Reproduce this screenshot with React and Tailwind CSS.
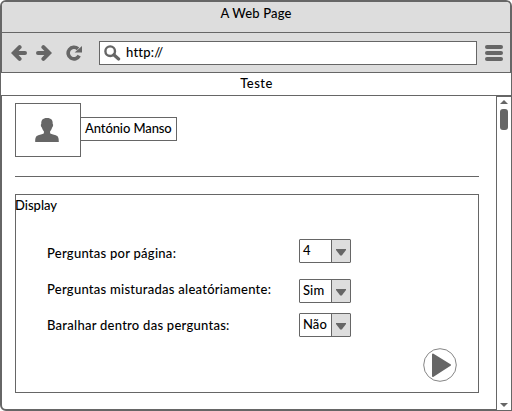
import React from 'react';

function Arrow({ className = '' }) {
  return (
    <svg width="16" height="16" viewBox="0 0 16 16" fill="none" stroke="#666" strokeWidth="4" className={className}>
      <path d="M8.6 2.2 2.8 8l5.8 5.8M3.5 8h10.5" strokeLinecap="round" />
    </svg>
  );
}

function Dropdown({ value, className = '' }) {
  return (
    <div className={`flex h-6 w-[52px] shrink-0 rounded-[1px] border border-[#666] bg-white ${className}`}>
      <div className="h-full w-[31px] pl-[3px] leading-[21px] tracking-[0.1px]">{value}</div>
      <div className="flex flex-1 items-center justify-center border-l border-[#666] bg-[#ddd] pt-[2px]">
        <svg width="10" height="7" viewBox="0 0 10 7" fill="#666"><path d="M0 0h10v1L5.8 6.5H4.2L0 1z" /></svg>
      </div>
    </div>
  );
}

function Setting({ label, value, className = '', labelClass }) {
  return (
    <div className={`flex h-6 ${className}`}>
      <div className={`w-[252px] whitespace-nowrap tracking-[0.26px] ${labelClass}`}>{label}</div>
      <Dropdown value={value} />
    </div>
  );
}

export default function App() {
  return (
    <div className="flex h-[411px] w-[512px] flex-col rounded-[6px] border-2 border-[#666] bg-white font-['Lato',sans-serif] text-[13px] font-medium text-black">
      <header className="h-[31px] shrink-0 rounded-t-[4px] border-b border-[#666] bg-[#ddd] text-center leading-[23px]">
        <span className="tracking-[0.15px]">A Web Page</span>
      </header>
      <div className="flex h-10 shrink-0 items-center border-b border-[#666] bg-[#ddd] pl-[9px] pr-[7px]">
        <Arrow />
        <Arrow className="ml-[9px] rotate-180" />
        <svg width="17" height="16" viewBox="0 0 17 16" fill="none" className="ml-[14px]">
          <path d="M12 3.9A5.8 5.8 0 1 0 13.2 10.6" stroke="#666" strokeWidth="3.6" />
          <path d="M16 1V7.6H8.6z" fill="#666" />
        </svg>
        <div className="ml-4 flex h-6 w-[378px] items-center border border-[#666] bg-white pl-1">
          <svg width="17" height="16" viewBox="0 0 17 16" fill="none" stroke="#666">
            <circle cx="6.2" cy="6.2" r="4.8" strokeWidth="2.4" />
            <path d="m9.8 9.8 4.8 4.2" strokeWidth="3.2" strokeLinecap="round" />
          </svg>
          <span className="ml-[5px] mt-px tracking-[0.2px]">http://</span>
        </div>
        <div className="ml-auto mt-px flex w-[18px] flex-col gap-[2px]">
          <i className="h-1 rounded-full bg-[#666]" />
          <i className="h-1 rounded-full bg-[#666]" />
          <i className="h-1 rounded-full bg-[#666]" />
        </div>
      </div>
      <div className="-mx-px h-[23px] shrink-0 border-b border-[#666] bg-white pl-px text-center leading-[21px] tracking-[0.5px]">Teste</div>
      <div className="flex min-h-0 flex-1">
        <main className="flex-1 pl-[13px] pt-[7px]">
          <div className="flex">
            <div className="flex h-[54px] w-[66px] items-center justify-center border border-[#666]">
              <svg width="24" height="24" viewBox="0 0 24 24" fill="#666" className="-ml-[3px]">
                <path d="M12 0C7.6 0 6 2.2 6.3 6c-.8 0-.4 3.2.6 3.6.3 1.5 1 2.8 2 3.7v2c-.4.9-3.4 1.2-5.7 2C.7 18.2.2 20 .2 24h23.6c0-4-.5-5.8-3-6.7-2.3-.8-5.3-1.1-5.7-2v-2c1-.9 1.7-2.2 2-3.7 1-.4 1.4-3.6.6-3.6C18 2.2 16.4 0 12 0z" />
              </svg>
            </div>
            <div className="-ml-px mt-[14px] h-6 w-[97px] whitespace-nowrap border border-[#666] pl-1 leading-[21px] -tracking-[0.1px]">António Manso</div>
          </div>
          <hr className="mt-[19px] w-[464px] border-[#666]" />
          <section className="mt-[17px] h-[199px] w-[464px] border border-[#666]">
            <div className="-ml-px h-[44px] leading-[21px]">Display</div>
            <div className="flex">
              <div className="pl-[31px]">
                <Setting label="Perguntas por página:" value="4" labelClass="leading-[29px]" />
                <Setting label="Perguntas misturadas aleatóriamente:" value="Sim" className="mt-4" labelClass="leading-[21px]" />
                <Setting label="Baralhar dentro das perguntas:" value="Não" className="mt-[10px]" labelClass="leading-[25px]" />
              </div>
              <svg width="34" height="34" viewBox="0 0 34 34" className="ml-[72px] mt-[109px]">
                <circle cx="17" cy="17" r="16.3" fill="white" stroke="#666" strokeWidth=".8" />
                <path d="M10 6.5 27 17 10 28z" fill="#666" stroke="#666" strokeWidth="2" strokeLinejoin="round" />
              </svg>
            </div>
          </section>
        </main>
        <aside className="-mb-[2px] -mr-[2px] flex w-4 flex-col items-center border border-[#666] bg-white py-[3px]">
          <svg width="8" height="4" viewBox="0 0 8 4" fill="#666"><path d="M0 4 4 0l4 4z" /></svg>
          <div className="mt-[5px] h-[21px] w-2 rounded-[3px] bg-[#666]" />
          <svg width="8" height="4" viewBox="0 0 8 4" fill="#666" className="mt-auto"><path d="m0 0 4 4 4-4z" /></svg>
        </aside>
      </div>
    </div>
  );
}
